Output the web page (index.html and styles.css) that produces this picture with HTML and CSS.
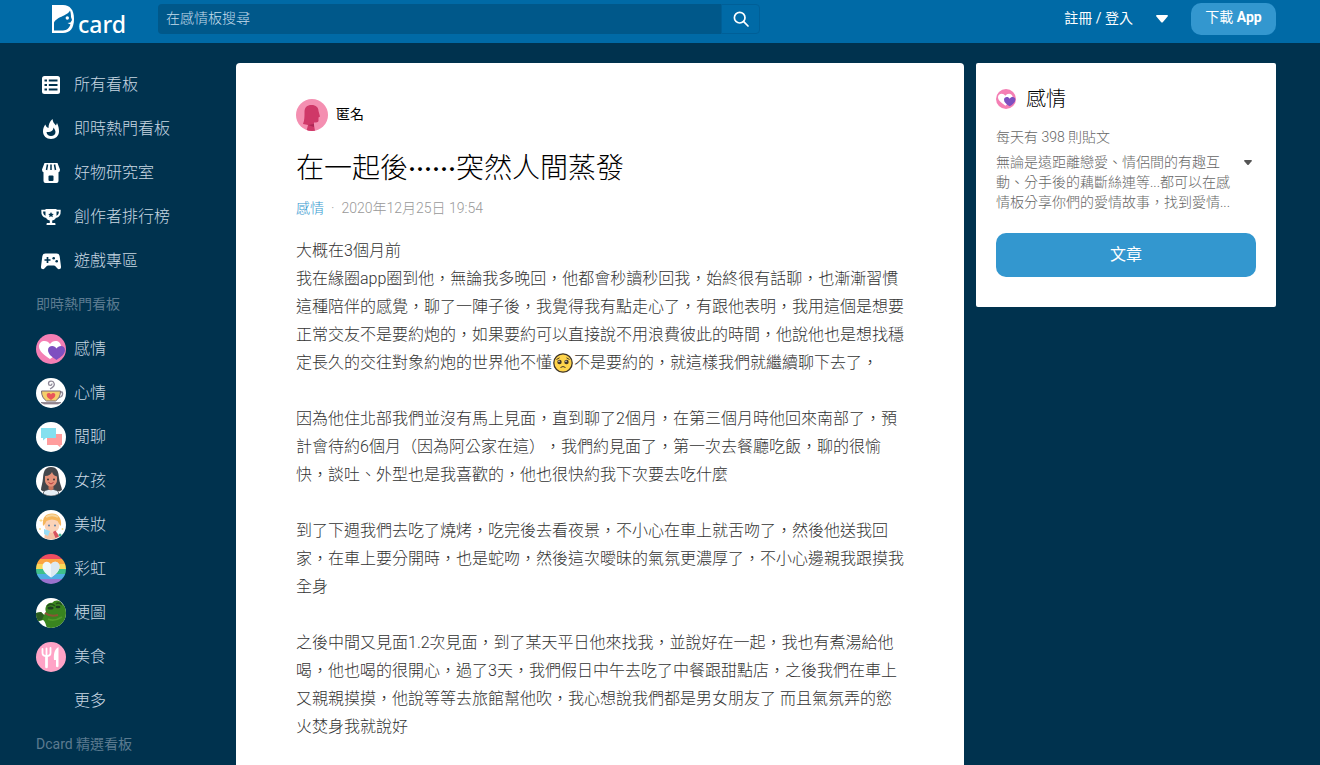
FILE: index.html
```html
<!DOCTYPE html>
<html lang="zh-Hant-TW">
<head>
    <meta charset="UTF-8">
    <meta name="viewport" content="width=device-width, initial-scale=1.0">
    <title>在一起後……突然人間蒸發 - 感情板 | Dcard</title>
    <link rel="stylesheet" href="styles.css">
</head>
<body>
    <!-- 共用圖示 -->
    <svg class="sprite" aria-hidden="true">
        <symbol id="heart-icon" viewBox="0 0 30 30">
            <circle cx="15" cy="15" r="15" fill="#f47fb4"/>
            <path d="M14 25C8 21 3 17 3 12.500C3 9 5.500 7 8.500 7C11 7 12.500 8 14 10C15.500 8 17 7 19.500 7C22.500 7 25 9 25 12.500C25 17 20 21 14 25Z" fill="#fff"/>
            <path d="M20.500 26C16 23 12 20 12 16C12 13.500 14 12 16.200 12C18.200 12 19.500 13 20.500 14.500C21.500 13 23 12 25 12C27.200 12 29 13.500 29 16C29 20 25 23 20.500 26Z" fill="#7e4fc0"/>
        </symbol>
    </svg>

    <header class="header">
        <a class="logo" href="#" aria-label="Dcard">
            <svg width="22" height="28" viewBox="0 0 22 28">
                <path d="M0 0H11C18 0 22 5 22 14S18 28 11 28H0Z" fill="#fff"/>
                <path d="M2 25.500V17.500C4 13.500 9 12 12 10.500C15 9 17 7.500 18 5.500C18.800 7.500 19 10 19 12L20 15L18.500 17.500L15.500 18L18.500 19.500C17.500 22.500 15 25.500 11 25.500Z" fill="#006aa6"/>
                <circle cx="15.300" cy="13" r="1.700" fill="#fff"/>
            </svg>
            <span class="logo-text">card</span>
        </a>

        <form class="search">
            <input class="search-input" type="text" placeholder="在感情板搜尋" aria-label="在感情板搜尋">
            <button class="search-button" type="button" aria-label="搜尋">
                <svg width="16" height="16" viewBox="0 0 16 16" fill="none" stroke="#fff" stroke-width="1.700" stroke-linecap="round">
                    <circle cx="6.700" cy="6.700" r="5.300"/>
                    <path d="M10.700 10.700L15 15"/>
                </svg>
            </button>
        </form>

        <nav class="header-nav">
            <a class="login" href="#">註冊 / 登入</a>
            <button class="menu-button" type="button" aria-label="更多選項">
                <svg width="12" height="8" viewBox="0 0 12 8"><path d="M1 0H11C12 0 12.200 1 11.600 1.600L6.800 7.200Q6 8 5.200 7.200L.4 1.600C-.2 1 0 0 1 0Z" fill="#fff"/></svg>
            </button>
            <a class="download" href="#">下載 <b>App</b></a>
        </nav>
    </header>

    <div class="container">
        <nav class="sidebar">
            <a class="side-item" href="#">
                <svg class="side-icon" viewBox="0 0 30 30">
                    <rect x="6" y="6" width="18" height="18" rx="2.500" fill="#fff"/>
                    <path d="M8.500 10.500H11M8.500 15H11M8.500 19.500H11M12.800 10.500H21.500M12.800 15H21.500M12.800 19.500H21.500" stroke="#00324e" stroke-width="2"/>
                </svg>
                <span>所有看板</span>
            </a>
            <a class="side-item" href="#">
                <svg class="side-icon" viewBox="0 0 30 30">
                    <path d="M16.500 5C17 9 19 10 20 11.500L21 9C22.500 12 23 14.500 23 17.500C23 22 19.500 25 15 25S7 22 7 17.500C7 14.500 8 12 9.500 10.500C9.700 12.500 11 13.500 12.500 14C12.500 10.500 13.500 7.500 16.500 5Z" fill="#fff"/>
                    <path d="M17.500 13.500C19 15.500 19.500 17 19.500 18C19.500 20.500 17.500 22 15 22S10.800 20.500 10.500 18C14 18.500 17 17.500 17.500 13.500Z" fill="#00324e"/>
                </svg>
                <span>即時熱門看板</span>
            </a>
            <a class="side-item" href="#">
                <svg class="side-icon" viewBox="0 0 30 30">
                    <path d="M8.500 5H21.500L24 11.500Q24 14 22.500 14.300V23Q22.500 25 20.500 25H9.500Q7.500 25 7.500 23V14.300Q6 14 6 11.500Z" fill="#fff"/>
                    <path d="M11.500 6.500L10.500 12M15 6.500V12M18.500 6.500L19.500 12" stroke="#00324e" stroke-width="1.500"/>
                    <rect x="12.500" y="17.500" width="5" height="5.500" rx="1" fill="#00324e"/>
                </svg>
                <span>好物研究室</span>
            </a>
            <a class="side-item" href="#">
                <svg class="side-icon" viewBox="0 0 30 30">
                    <path d="M9.500 7H20.500V13C20.500 16.500 18.500 18.300 16.200 18.600V21H19Q19.500 21 19.500 23H10.500Q10.500 21 11 21H13.800V18.600C11.500 18.300 9.500 16.500 9.500 13Z" fill="#fff"/>
                    <path d="M10 8.700H6.200C6 12.500 8 14.500 10.500 15M20 8.700H23.800C24 12.500 22 14.500 19.500 15" stroke="#fff" stroke-width="1.800" fill="none"/>
                    <path d="M15 10L15.900 11.800L17.800 12L16.400 13.300L16.800 15.200L15 14.200L13.200 15.200L13.600 13.300L12.200 12L14.100 11.800Z" fill="#00324e"/>
                </svg>
                <span>創作者排行榜</span>
            </a>
            <a class="side-item" href="#">
                <svg class="side-icon" viewBox="0 0 30 30">
                    <path d="M9.500 7.500H20.500C22.500 7.500 23.300 8.500 23.700 10.500L25 20.500C25.200 22.500 24.200 23.200 22.800 23.200C21 23.200 19.800 19.500 18 19.500H12C10.200 19.500 9 23.200 7.200 23.200C5.800 23.200 4.800 22.500 5 20.500L6.300 10.500C6.700 8.500 7.500 7.500 9.500 7.500Z" fill="#fff"/>
                    <path d="M8.500 14H14.500M11.500 11V17" stroke="#00324e" stroke-width="1.700"/>
                    <circle cx="17.700" cy="12.300" r="1.300" fill="#00324e"/>
                    <circle cx="20.700" cy="15.300" r="1.300" fill="#00324e"/>
                </svg>
                <span>遊戲專區</span>
            </a>

            <h2 class="side-title">即時熱門看板</h2>

            <a class="side-item" href="#">
                <svg class="side-icon"><use href="#heart-icon"/></svg>
                <span>感情</span>
            </a>
            <a class="side-item" href="#">
                <svg class="side-icon" viewBox="0 0 30 30">
                    <circle cx="15" cy="15" r="15" fill="#fff"/>
                    <path d="M14 11C18 9 19 7 18 5C17 2.500 12.500 2.500 12.500 5.500C12.500 8 16 8 16 5.500" fill="none" stroke="#8d8797" stroke-width="1.300"/>
                    <path d="M24 14H26Q27.500 16 25.500 18.500L22 20" fill="none" stroke="#8d8797" stroke-width="1.300"/>
                    <path d="M5.500 13H24.500C24.500 18 22.500 21 19.500 23H10.500C7.500 21 5.500 18 5.500 13Z" fill="#f5cf6c" stroke="#766b78"/>
                    <path d="M15 22C12.500 20.500 10.700 19 10.700 17C10.700 14.800 13.700 14.300 15 16.500C16.300 14.300 19.300 14.800 19.300 17C19.300 19 17.500 20.500 15 22Z" fill="#e9565a"/>
                    <path d="M5 24.500H25L22 26H8Z" fill="#a18d96" stroke="#6f6672" stroke-width=".6"/>
                </svg>
                <span>心情</span>
            </a>
            <a class="side-item" href="#">
                <svg class="side-icon" viewBox="0 0 30 30">
                    <circle cx="15" cy="15" r="15" fill="#fff"/>
                    <path d="M11 12H26V23H24.500V25.500L21.500 23H11Z" fill="#ff9d9d"/>
                    <path d="M5 6H20V16H10L7 18.500V16H5Z" fill="#84e0ef"/>
                </svg>
                <span>閒聊</span>
            </a>
            <a class="side-item" href="#">
                <svg class="side-icon" viewBox="0 0 30 30">
                    <circle cx="15" cy="15" r="15" fill="#fff"/>
                    <path d="M15 1C8.500 1 7.500 6 7 12C6.700 17 5 21 5 24Q9 27 12 24H18Q21 27 26 24C25.500 20 23.500 17 23 12C22.500 5 21 1 15 1Z" fill="#44474c"/>
                    <path d="M7.500 28V26Q9 24 12.500 23.500H17.500Q21 24 22.500 26V28Q19 30 15 30T7.500 28Z" fill="#e6eef5" stroke="#454950" stroke-width=".7"/>
                    <path d="M12.500 18H17.500V23Q15 25.500 12.500 23Z" fill="#c8755d"/>
                    <path d="M9 10C13 10 15 8 16 6C17 9 19 10 21 10.500V14C21 18 18 20.500 15 20.500S9 18 9 14Z" fill="#e5927a"/>
                    <circle cx="12" cy="13.500" r=".9" fill="#333"/>
                    <circle cx="18" cy="13.500" r=".9" fill="#333"/>
                    <path d="M12.500 16.500Q15 19.500 17.500 16.500" stroke="#b3373d" fill="none"/>
                </svg>
                <span>女孩</span>
            </a>
            <a class="side-item" href="#">
                <svg class="side-icon" viewBox="0 0 30 30">
                    <circle cx="15" cy="15" r="15" fill="#fff"/>
                    <path d="M8.500 28Q8 22 13 22H19Q23 23 23 27Q16 31.500 8.500 28Z" fill="#f4c1a2"/>
                    <ellipse cx="16" cy="14.500" rx="7.500" ry="8.500" fill="#fbd3b8"/>
                    <path d="M7 16C6 7 10 3.500 16 3.500S26 8 25 16C23.500 15 22.500 12.500 21.500 11Q16 8 10.500 11C9.500 13 8.500 15 7 16Z" fill="#f6b65c"/>
                    <path d="M10 7Q16 3.500 22 7" fill="none" stroke="#f5d6a0" stroke-width="2"/>
                    <circle cx="13" cy="15.500" r="1" fill="#5d7fa8"/>
                    <circle cx="19" cy="15.500" r="1" fill="#5d7fa8"/>
                    <path d="M8 19L14 21L12 26L8 24Z" fill="#99dcf5"/>
                    <path d="M17 22L19.500 20.500L23 26.500L19.500 28Z" fill="#d7525e"/>
                    <circle cx="24" cy="25" r="1.500" fill="#43b695"/>
                    <path d="M5 9V12M3.500 10.500H6.500M4 18V20M3 19H5M26.500 18V20M25.500 19H27.500" stroke="#f8d98c"/>
                </svg>
                <span>美妝</span>
            </a>
            <a class="side-item" href="#">
                <svg class="side-icon" viewBox="0 0 30 30">
                    <clipPath id="rainbow-clip"><circle cx="15" cy="15" r="15"/></clipPath>
                    <g clip-path="url(#rainbow-clip)">
                        <path d="M0 0H30V5H0Z" fill="#ee4c60"/>
                        <path d="M0 5H30V10H0Z" fill="#fba442"/>
                        <path d="M0 10H30V15H0Z" fill="#fbd85a"/>
                        <path d="M0 15H30V20H0Z" fill="#3fc08a"/>
                        <path d="M0 20H30V25H0Z" fill="#51aee3"/>
                        <path d="M0 25H30V30H0Z" fill="#9a72ce"/>
                    </g>
                    <path d="M15 23.500C10 20 6.500 17 6.500 12.500C6.500 7 13 6 15 10.500C17 6 23.500 7 23.500 12.500C23.500 17 20 20 15 23.500Z" fill="#f0f7fa"/>
                    <path d="M15 10.500C17 6 23.500 7 23.500 12.500C23.500 17 20 20 15 23.500Z" fill="#dce9f1"/>
                </svg>
                <span>彩虹</span>
            </a>
            <a class="side-item" href="#">
                <svg class="side-icon" viewBox="0 0 30 30">
                    <clipPath id="frog-clip"><circle cx="15" cy="15" r="15"/></clipPath>
                    <g clip-path="url(#frog-clip)">
                        <rect width="30" height="30" fill="#fff"/>
                        <path d="M0 15L5 14L8 17L10 14C8 9 12 4 16 5C19 1 25 2 26 6L30 9V30H11C10 27 9 23 7 22L0 24Z" fill="#39841f"/>
                        <path d="M0 15L5 14L8 17L6 22L0 23Z" fill="#2b5d22"/>
                        <path d="M11 8Q15 4.500 19 8M20 6Q23 3.500 26 7" fill="none" stroke="#224f1b" stroke-width="1.500"/>
                        <ellipse cx="14.500" cy="10" rx="3" ry="1.500" fill="#1d3d20"/>
                        <ellipse cx="22" cy="9" rx="2.500" ry="1.200" fill="#1d3d20"/>
                        <path d="M9 15Q14 19 22 17" fill="none" stroke="#8b5433" stroke-width="2"/>
                        <path d="M12 21Q18 24 26 19" fill="none" stroke="#4f9a2a" stroke-width="1.500"/>
                    </g>
                </svg>
                <span>梗圖</span>
            </a>
            <a class="side-item" href="#">
                <svg class="side-icon" viewBox="0 0 30 30">
                    <circle cx="15" cy="15" r="15" fill="#ffa3c6"/>
                    <path d="M6.500 7V11Q6.500 14 10.500 14T14.500 11V6M10.500 6.500V24" fill="none" stroke="#fff" stroke-width="1.800" stroke-linecap="round"/>
                    <path d="M10.500 14V25" stroke="#fff" stroke-width="2.600" stroke-linecap="round"/>
                    <path d="M22.500 5V24.500Q21.300 26 20 24.500V18H18C17.500 12 18.500 7 22.500 5Z" fill="#fff"/>
                </svg>
                <span>美食</span>
            </a>
            <a class="side-item side-more" href="#"><span>更多</span></a>

            <h2 class="side-title">Dcard 精選看板</h2>
        </nav>

        <main class="post">
            <div class="author">
                <svg width="32" height="32" viewBox="0 0 32 32">
                    <clipPath id="avatar-clip"><circle cx="16" cy="16" r="16"/></clipPath>
                    <g clip-path="url(#avatar-clip)">
                        <rect width="32" height="32" fill="#f48fb1"/>
                        <path d="M8.500 13C8.500 8.500 11 6 15.500 6C20 6 22.500 8.500 22.500 12L24 17.500L22.500 18.500V22Q22 23.500 18 23.500V26L19 32H10.500L12 26L7 25C8.500 21 8.500 18 8.500 13Z" fill="#cf3868"/>
                        <path d="M12 26L18 25V28Z" fill="#ad2755"/>
                    </g>
                </svg>
                <span class="author-name">匿名</span>
            </div>
            <h1 class="post-title">在一起後<span class="dots">……</span>突然人間蒸發</h1>
            <div class="post-meta">
                <a class="forum-link" href="#">感情</a>
                <span class="meta-dot">·</span>
                <span>2020年12月25日 19:54</span>
            </div>
            <div class="post-content">
                <p>大概在3個月前<br>我在緣圈app圈到他，無論我多晚回，他都會秒讀秒回我，始終很有話聊，也漸漸習慣這種陪伴的感覺，聊了一陣子後，我覺得我有點走心了，有跟他表明，我用這個是想要正常交友不是要約炮的，如果要約可以直接說不用浪費彼此的時間，他說他也是想找穩定長久的交往對象約炮的世界他不懂<svg class="emoji" viewBox="0 0 20 20" role="img" aria-label="🥺"><circle cx="10" cy="10" r="9.200" fill="#ffd54c" stroke="#3f3529" stroke-width="1.300"/><circle cx="6.500" cy="9" r="2.200" fill="#433729"/><circle cx="13.500" cy="9" r="2.200" fill="#433729"/><circle cx="6" cy="8.300" r=".7" fill="#fff"/><circle cx="13" cy="8.300" r=".7" fill="#fff"/><path d="M3.500 6.500L6.500 4.800M16.500 6.500L13.500 4.800M7.500 14.500Q10 12.500 12.500 14.500" fill="none" stroke="#433729"/></svg>不是要約的，就這樣我們就繼續聊下去了，</p>
                <p>因為他住北部我們並沒有馬上見面，直到聊了2個月，在第三個月時他回來南部了，預計會待約6個月（因為阿公家在這），我們約見面了，第一次去餐廳吃飯，聊的很愉快，談吐、外型也是我喜歡的，他也很快約我下次要去吃什麼</p>
                <p>到了下週我們去吃了燒烤，吃完後去看夜景，不小心在車上就舌吻了，然後他送我回家，在車上要分開時，也是蛇吻，然後這次曖昧的氣氛更濃厚了，不小心邊親我跟摸我全身</p>
                <p>之後中間又見面1.2次見面，到了某天平日他來找我，並說好在一起，我也有煮湯給他喝，他也喝的很開心，過了3天，我們假日中午去吃了中餐跟甜點店，之後我們在車上又親親摸摸，他說等等去旅館幫他吹，我心想說我們都是男女朋友了 而且氣氛弄的慾火焚身我就說好</p>
            </div>
        </main>

        <aside class="forum-card">
            <div class="forum-name">
                <svg width="20" height="20"><use href="#heart-icon"/></svg>
                感情
            </div>
            <div class="forum-count">每天有 398 則貼文</div>
            <div class="forum-desc">
                <p>無論是遠距離戀愛、情侶間的有趣互動、分手後的藕斷絲連等...都可以在感情板分享你們的愛情故事，找到愛情...</p>
                <button class="expand" type="button" aria-label="展開">
                    <svg width="8" height="5" viewBox="0 0 8 5"><path d="M.7 0H7.300Q8.300 .3 7.600 1.200L4.700 4.700Q4 5.300 3.300 4.700L.4 1.200Q-.3 .3 .7 0Z" fill="#555"/></svg>
                </button>
            </div>
            <a class="forum-button" href="#">文章</a>
        </aside>
    </div>
</body>
</html>
```

FILE: styles.css
```css
* {
    box-sizing: border-box;
}

body {
    margin: 0;
    background: #00324e;
    font-family: Roboto, "Noto Sans CJK TC", sans-serif;
    font-weight: 300;
    text-spacing-trim: space-all;
    height: 100vh;
    overflow: hidden;
}

a {
    text-decoration: none;
    color: inherit;
}

button {
    background: none;
    border: none;
    padding: 0;
    cursor: pointer;
    display: flex;
    align-items: center;
    justify-content: center;
}

h1, h2, p {
    margin: 0;
    font-weight: inherit;
}

svg {
    flex-shrink: 0;
}

.sprite {
    display: none;
}

/* 頂部導覽列 */
.header {
    display: flex;
    align-items: center;
    background: #006aa6;
    height: 43px;
    padding: 0 44px 5px 52px;
}

.logo {
    display: flex;
    align-items: baseline;
    gap: 4px;
    width: 106px;
    color: #fff;
}

.logo-text {
    font-family: "Noto Sans", sans-serif;
    font-size: 23px;
    font-weight: 500;
    line-height: 20px;
}

.search {
    display: flex;
    flex: 0 1 602px;
    height: 30px;
}

.search-input {
    flex: 1;
    min-width: 0;
    border: none;
    border-radius: 4px 0 0 4px;
    background: #00588a;
    padding: 0 8px 2px;
    color: #fff;
    font-family: inherit;
    font-size: 14px;
    font-weight: 300;
}

.search-input::placeholder {
    color: #c4dcea;
}

.search-button {
    width: 39px;
    border: 1px solid #005f97;
    border-radius: 0 4px 4px 0;
}

.header-nav {
    display: flex;
    align-items: center;
    margin-left: auto;
    color: #fff;
    font-size: 14px;
    font-weight: 400;
}

.login {
    padding-bottom: 4px;
}

.menu-button {
    width: 58px;
    height: 32px;
}

.download {
    background: #3397cf;
    border-radius: 10px;
    width: 85px;
    padding-bottom: 4px;
    line-height: 28px;
    text-align: center;
}

/* 主要區塊 */
.container {
    display: flex;
    align-items: flex-start;
    padding: 20px 44px 0 36px;
}

.sidebar {
    width: 200px;
    flex-shrink: 0;
    color: #c8d7e2;
    font-size: 16px;
}

.side-item {
    display: flex;
    align-items: center;
    gap: 8px;
    height: 44px;
}

.side-item span {
    padding-bottom: 4px;
}

.side-icon {
    width: 30px;
    height: 30px;
}

.side-more {
    padding-left: 38px;
}

.side-title {
    padding-bottom: 2px;
    color: #5c7b90;
    font-size: 14px;
    font-weight: 400;
    line-height: 42px;
}

/* 文章 */
.post {
    flex: 1;
    min-width: 0;
    background: #fff;
    border-radius: 4px 4px 0 0;
    padding: 36px 60px 60px;
}

.author {
    display: flex;
    align-items: center;
    gap: 8px;
    font-size: 14px;
    color: #000;
}

.author-name {
    padding-bottom: 4px;
    font-weight: 400;
}

.post-title {
    margin-top: 18px;
    font-size: 28px;
    line-height: 40px;
    color: #000;
}

.dots {
    font-family: "Noto Sans CJK TC", sans-serif;
    font-size: 24px;
    font-weight: 700;
    line-height: 1;
}

.post-meta {
    display: flex;
    gap: 7px;
    margin-top: 9px;
    font-size: 14px;
    line-height: 20px;
    color: #999;
}

.forum-link {
    color: #3397cf;
}

.post-content {
    margin-top: 19px;
    font-size: 16px;
    line-height: 28px;
    color: #333;
}

.post-content p + p {
    margin-top: 28px;
}

.emoji {
    width: 20px;
    height: 20px;
    margin: 0 1px;
    vertical-align: -5px;
}

/* 看板資訊 */
.forum-card {
    width: 300px;
    flex-shrink: 0;
    margin-left: 12px;
    padding: 20px 20px 30px;
    background: #fff;
    border-radius: 2px;
    color: #666;
    font-size: 14px;
    line-height: 20px;
}

.forum-name {
    display: flex;
    align-items: center;
    gap: 10px;
    color: #000;
    font-size: 20px;
    line-height: 32px;
}

.forum-count {
    margin-top: 12px;
}

.forum-desc {
    display: flex;
    align-items: flex-start;
    margin-top: 5px;
}

.forum-desc p {
    flex: 1;
}

.expand {
    width: 20px;
    height: 20px;
    padding-right: 4px;
    justify-content: flex-end;
}

.forum-button {
    display: block;
    margin-top: 21px;
    border-radius: 10px;
    background: #3397cf;
    color: #fff;
    font-size: 16px;
    font-weight: 400;
    line-height: 44px;
    text-align: center;
}
```
